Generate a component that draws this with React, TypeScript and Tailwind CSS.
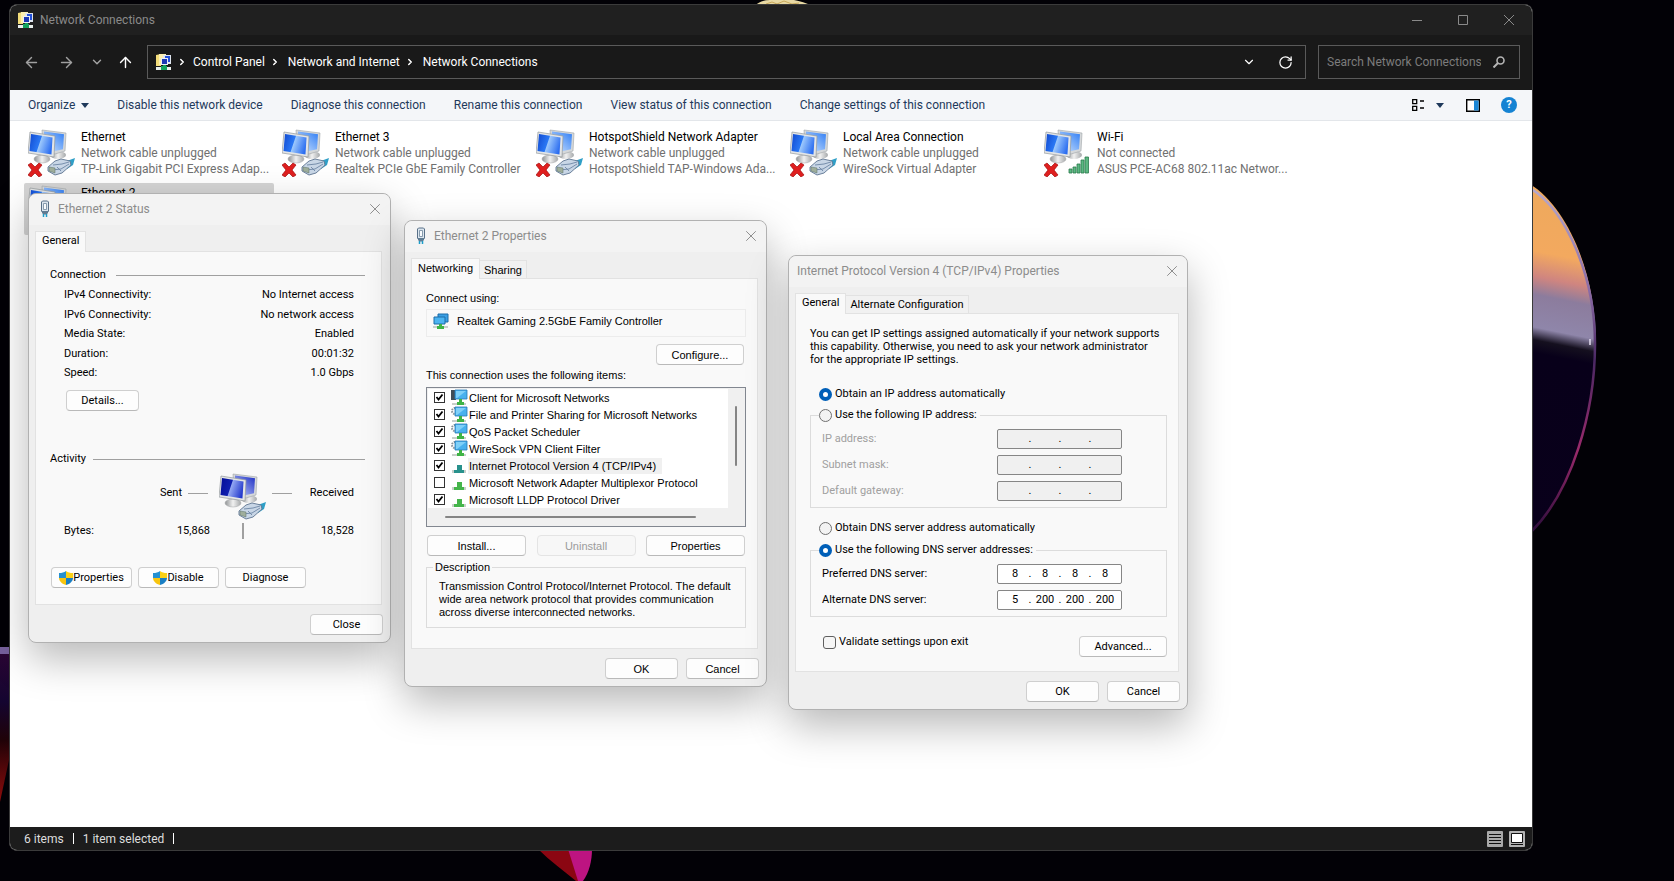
import { type ReactNode } from 'react'
import { ArrowLeft, ArrowRight, ArrowUp, ChevronDown, ChevronRight, RotateCw, X } from 'lucide-react'

const commands = [
  'Disable this network device',
  'Diagnose this connection',
  'Rename this connection',
  'View status of this connection',
  'Change settings of this connection',
]

const adapters = [
  { name: 'Ethernet', state: 'Network cable unplugged', device: 'TP-Link Gigabit PCI Express Adap...', kind: 'cable' },
  { name: 'Ethernet 3', state: 'Network cable unplugged', device: 'Realtek PCIe GbE Family Controller', kind: 'cable' },
  { name: 'HotspotShield Network Adapter', state: 'Network cable unplugged', device: 'HotspotShield TAP-Windows Ada...', kind: 'cable' },
  { name: 'Local Area Connection', state: 'Network cable unplugged', device: 'WireSock Virtual Adapter', kind: 'cable' },
  { name: 'Wi-Fi', state: 'Not connected', device: 'ASUS PCE-AC68 802.11ac Networ...', kind: 'wifi' },
  { name: 'Ethernet 2', state: '', device: '', kind: 'active' },
]

const statusRows = [
  ['IPv4 Connectivity:', 'No Internet access'],
  ['IPv6 Connectivity:', 'No network access'],
  ['Media State:', 'Enabled'],
  ['Duration:', '00:01:32'],
  ['Speed:', '1.0 Gbps'],
]

const items = [
  { name: 'Client for Microsoft Networks', on: true, icon: 'client' },
  { name: 'File and Printer Sharing for Microsoft Networks', on: true, icon: 'service' },
  { name: 'QoS Packet Scheduler', on: true, icon: 'service' },
  { name: 'WireSock VPN Client Filter', on: true, icon: 'service' },
  { name: 'Internet Protocol Version 4 (TCP/IPv4)', on: true, icon: 'selected' },
  { name: 'Microsoft Network Adapter Multiplexor Protocol', on: false, icon: 'protocol' },
  { name: 'Microsoft LLDP Protocol Driver', on: true, icon: 'protocol' },
]

function Wallpaper() {
  return (
    <div className="absolute inset-0 overflow-hidden bg-[#020106]" aria-hidden="true">
      <svg className="absolute left-[700px] top-0" width="180" height="8" viewBox="0 0 180 8">
        <path d="M54 6c5-4 10-6 16-6h24c6 1 12 3 19 6z" fill="#e8d9a4" />
        <path d="M66 4l6-2 5 2 7-3 8 3 7-1" stroke="#c9a95c" fill="none" />
      </svg>
      <svg className="absolute left-0 top-[640px]" width="12" height="180" viewBox="0 0 12 180">
        <defs>
          <linearGradient id="leftPetal" x1="0" y1="0" x2="0" y2="1">
            <stop offset="0" stopColor="#2c0634" />
            <stop offset=".35" stopColor="#140530" />
            <stop offset=".6" stopColor="#200207" />
            <stop offset="1" stopColor="#8e0c0c" />
          </linearGradient>
        </defs>
        <path d="M0 8h12v98L0 162z" fill="url(#leftPetal)" />
        <path d="M0 7h12v7H0z" fill="#76609c" />
      </svg>
      <svg className="absolute bottom-0 left-[530px]" width="70" height="34" viewBox="0 0 70 34">
        <path d="M8 2h32l10 32h-4C34 24 20 14 8 2z" fill="#8b0612" />
        <path d="M38 2h24c0 12-3 24-9 32h-5z" fill="#bd1481" />
      </svg>
      <svg className="absolute right-[74px] top-[184px]" width="70" height="356" viewBox="0 0 70 356">
        <defs>
          <linearGradient id="petal" gradientUnits="userSpaceOnUse" x1="35" y1="0" x2="-35" y2="350">
            <stop offset="0" stopColor="#eda95c" />
            <stop offset=".2" stopColor="#f3a95f" />
            <stop offset=".27" stopColor="#cf8580" />
            <stop offset=".32" stopColor="#8c7c9d" />
            <stop offset=".41" stopColor="#8f86aa" />
            <stop offset=".445" stopColor="#15101f" />
            <stop offset=".48" stopColor="#08001a" />
            <stop offset="1" stopColor="#09001b" />
          </linearGradient>
          <linearGradient id="rim" x1="0" y1="0" x2="0" y2="1">
            <stop offset="0" stopColor="#b7a9cc" />
            <stop offset=".3" stopColor="#8a6ba6" />
            <stop offset=".5" stopColor="#4a2863" />
            <stop offset=".76" stopColor="#9a2a6b" />
            <stop offset="1" stopColor="#2c0d3c" />
          </linearGradient>
        </defs>
        <path d="M0 0C38 24 66 90 66 160S42 310 0 350z" fill="url(#petal)" />
        <path d="M0 4C36 26 65 92 65 160S42 308 0 349" fill="none" stroke="url(#rim)" strokeWidth="2.5" />
        <path d="M60 155v6" stroke="#e4def0" strokeWidth="1.5" />
      </svg>
    </div>
  )
}

function Monitors({ deep }: { deep?: boolean }) {
  const id = deep ? 'deep' : 'bright'
  return (
    <>
      <defs>
        <linearGradient id={`screen-${id}`} x1="0" y1=".3" x2="1" y2=".6">
          <stop offset="0" stopColor={deep ? '#06109a' : '#1450d6'} />
          <stop offset=".42" stopColor={deep ? '#1020b0' : '#2a78f4'} />
          <stop offset=".46" stopColor={deep ? '#93a7f2' : '#9cc8fc'} />
          <stop offset="1" stopColor={deep ? '#2238cc' : '#2a6cf0'} />
        </linearGradient>
        <linearGradient id={`back-${id}`} x1="0" y1="1" x2="1" y2="0">
          <stop offset="0" stopColor={deep ? '#c3cffa' : '#d3e7fe'} />
          <stop offset="1" stopColor={deep ? '#1a2cc4' : '#2f7df4'} />
        </linearGradient>
        <linearGradient id={`stand-${id}`} x1="0" y1="0" x2="1" y2="0">
          <stop offset="0" stopColor="#8f9294" />
          <stop offset=".5" stopColor="#f1f1f1" />
          <stop offset="1" stopColor="#a5a8aa" />
        </linearGradient>
      </defs>
      <ellipse cx="30" cy="26" rx="8" ry="4" fill={`url(#stand-${id})`} />
      <path d="M14 1l24 3-1 18-10 3-12-4z" fill="#d5d8da" stroke="#9ea3a6" strokeWidth=".6" />
      <path d="M16 2.500l20 2.800-1 15-9 2-10-4z" fill={`url(#back-${id})`} />
      <path d="M11 23l8 1 1 5h-8z" fill="#b6babd" />
      <ellipse cx="14" cy="30" rx="8" ry="4" fill={`url(#stand-${id})`} stroke="#a4a7a9" strokeWidth=".5" />
      <path d="M2 3l25 4-1 21L0 24z" fill="#e3e5e6" stroke="#94999c" strokeWidth=".7" />
      <path d="M3 5l21.500 3.500-1 17L1.500 22z" fill={`url(#screen-${id})`} />
    </>
  )
}

function Plug() {
  return (
    <g>
      <path d="M36 33l11-4-2 7-6 4z" fill="#2f9fc7" />
      <path d="M20 38l7-6 6-2 9 2 1 4-9 8-7 2-7-4z" fill="#c8d6e6" stroke="#5f7591" strokeWidth=".9" />
      <path d="M25 36l9-1 7-2M24 41l9-1 8-5M29 38l4 4" fill="none" stroke="#6d86a5" strokeWidth=".9" />
      <path d="M21 38l6 1v5l-6-2z" fill="#9fae9b" stroke="#5d7368" strokeWidth=".5" />
    </g>
  )
}

function AdapterIcon({ kind }: { kind: string }) {
  return (
    <svg className="shrink-0" width="48" height="48" viewBox="0 0 48 48" aria-hidden="true">
      <Monitors deep={kind === 'deep'} />
      {kind === 'wifi' ? (
        <g fill="#5cb882" stroke="#2a7a4c" strokeWidth=".8">
          <path d="M25 40h3v4h-3zM29 38h3v6h-3zM33 35h3v9h-3zM37 31h3v13h-3zM41 28h3.500v16H41z" />
        </g>
      ) : (
        <Plug />
      )}
      {(kind === 'cable' || kind === 'wifi') && (
        <path d="M0 36l3-2 4 4 4-4 3 2-4 5 4 5-3 2-4-4-4 4-3-2 4-5z" fill="#df1f1f" stroke="#a30f0f" strokeWidth=".7" />
      )}
    </svg>
  )
}

function FolderIcon() {
  return (
    <svg className="shrink-0" width="16" height="16" viewBox="0 0 16 16" aria-hidden="true">
      <path d="M0 1l5-1v12H0z" fill="#f3dd7a" />
      <path d="M3 0h7v11H3z" fill="#fbeeb0" />
      <path d="M7 1h8v9H7z" fill="#dfe5ee" />
      <path d="M9 2h5v6H9z" fill="#2350d8" />
      <path d="M5 4h7v7H5z" fill="#e9eef5" />
      <path d="M6 5h5v5H6z" fill="#1b38b4" />
      <path d="M7 11h3v2H7z" fill="#14a05c" />
      <path d="M0 13h15v3H0z" fill="#e9efec" />
      <path d="M5 12h6v4H5z" fill="#12a35e" />
    </svg>
  )
}

function CableIcon() {
  return (
    <svg width="10" height="18" viewBox="0 0 10 18" aria-hidden="true">
      <path d="M2.500 1h5l1 1v9l-2 3h-3l-2-3V2z" fill="#dbe5ee" stroke="#587088" />
      <path d="M3.500 3.500h3v6h-3z" fill="#f8fbfd" stroke="#6d859b" strokeWidth=".8" />
      <path d="M2 11h6v1l-1 2H3l-1-2z" fill="#5f7b92" />
      <path d="M3.500 14v3M6.500 14v3" stroke="#1b9dc9" strokeWidth="1.500" />
    </svg>
  )
}

function ShieldIcon() {
  return (
    <svg width="14" height="14" viewBox="0 0 14 14" aria-hidden="true">
      <path d="M7 0C5 1.500 3 2 0 2v5h7z" fill="#2590d0" />
      <path d="M7 0c2 1.500 4 2 7 2v5H7z" fill="#fbd116" />
      <path d="M0 7c0 3 3 6 7 7V7z" fill="#f8c50f" />
      <path d="M14 7c0 3-3 6-7 7V7z" fill="#1a7fc4" />
    </svg>
  )
}

function ItemIcon({ icon }: { icon: string }) {
  const protocol = icon === 'protocol' || icon === 'selected'
  const green = icon === 'selected' ? '#28918c' : '#45b54b'
  return (
    <svg className="shrink-0" width="17" height="17" viewBox="0 0 17 17" aria-hidden="true">
      {protocol ? (
        <>
          <path d="M1 13h14v3H1z" fill="#c9cfcb" />
          <path d="M6 8h5v5h2v3H3v-3h3z" fill={green} />
        </>
      ) : (
        <>
          {icon === 'client' && <path d="M0 1h5v10H0z" fill="#414c55" />}
          {icon === 'service' && <circle cx="4" cy="5" r="3" fill="none" stroke="#8b9399" strokeWidth="2" strokeDasharray="1.500 1" />}
          <path d="M4 1h12v9H4z" fill="#48b1ee" stroke="#2878b4" strokeWidth=".8" />
          <path d="M5 2h10l-9 7H5z" fill="#7fd0f8" />
          <path d="M1 14h14v2H1z" fill="#c9cfcb" />
          <path d="M8 10h3v3h2v3H6v-3h2z" fill="#3fb446" />
        </>
      )}
    </svg>
  )
}

function ControllerIcon() {
  return (
    <svg width="16" height="16" viewBox="0 0 16 16" aria-hidden="true">
      <path d="M5 1h10v8H5z" fill="#3a9fe4" stroke="#1d6da8" />
      <path d="M1 4h11v7H1z" fill="#4cb4f1" stroke="#1d6da8" />
      <path d="M0 13h15v2H0z" fill="#c9cfcb" />
      <path d="M6 11h3v2h2v3H4v-3h2z" fill="#3fb446" />
    </svg>
  )
}

function Button({ children, className = 'w-[73px]', disabled }: { children: ReactNode; className?: string; disabled?: boolean }) {
  return (
    <button
      type="button"
      disabled={disabled}
      className={`flex h-[21px] items-center justify-center rounded border border-[#cfcfcf] border-b-[#b9b9b9] bg-[#fdfdfd] disabled:border-[#e4e4e4] disabled:bg-[#f7f7f7] disabled:text-[#9b9b9b] ${className}`}
    >
      {children}
    </button>
  )
}

function Dialog({ title, icon, tabs, className, footer, children }: {
  title: string
  icon?: ReactNode
  tabs: string[]
  className: string
  footer: ReactNode
  children: ReactNode
}) {
  return (
    <section
      role="dialog"
      aria-label={title}
      className={`absolute rounded-lg border border-[#b1b1b1] bg-[#efefef] text-[11px] leading-4 whitespace-nowrap text-black shadow-[0_16px_40px_rgba(0,0,0,0.28)] ${className}`}
    >
      <header className="flex h-[31px] items-center rounded-t-lg bg-[#f3f3f3] pr-[6px] pb-[2px] pl-2 font-['Roboto',sans-serif] text-[12px] text-[#8c8c8c]">
        {icon && <span className="mr-2 ml-[3px]">{icon}</span>}
        <h2>{title}</h2>
        <button type="button" aria-label="Close" className="ml-auto">
          <X size={18} strokeWidth={1.3} />
        </button>
      </header>
      <div className="px-[6px] pt-[6px]">
        <div role="tablist" className="flex items-end">
          {tabs.map((tab, i) => (
            <button
              key={tab}
              type="button"
              role="tab"
              aria-selected={i === 0}
              className={
                i === 0
                  ? 'relative -mb-px h-[21px] border border-b-0 border-[#e2e2e2] bg-[#f9f9f9] px-[6px] pb-[2px]'
                  : 'h-[18px] border border-b-0 border-l-0 border-[#e2e2e2] bg-[#f1f1f1] px-1'
              }
            >
              {tab}
            </button>
          ))}
        </div>
        <div className="mr-[2px] border border-[#e2e2e2] bg-[#f9f9f9]">{children}</div>
      </div>
      <footer className="flex justify-end gap-2 px-[7px] pt-[9px] pb-[7px]">{footer}</footer>
    </section>
  )
}

function StatusDialog() {
  return (
    <Dialog
      title="Ethernet 2 Status"
      icon={<CableIcon />}
      tabs={['General']}
      className="top-[193px] left-[28px] w-[363px] font-['Roboto',sans-serif]"
      footer={<Button>Close</Button>}
    >
      <div className="pt-[15px] pr-4 pb-4 pl-[14px]">
        <div className="flex items-center gap-[10px]">
          <h3>Connection</h3>
          <hr className="grow border-[#a0a0a0]" />
        </div>
        <dl className="mt-1 flex h-[94px] flex-col justify-between pr-[11px] pl-[14px]">
          {statusRows.map(([label, value]) => (
            <div key={label} className="flex justify-between">
              <dt>{label}</dt>
              <dd>{value}</dd>
            </div>
          ))}
        </dl>
        <div className="mt-[9px] pl-4">
          <Button>Details...</Button>
        </div>
        <div className="mt-10 flex items-center gap-[7px]">
          <h3>Activity</h3>
          <hr className="grow border-[#a0a0a0]" />
        </div>
        <div className="mt-[6px] grid grid-cols-[150px_58px_1fr] pr-[11px] pl-[14px]">
          <div className="flex h-10 items-center justify-end gap-[6px] pr-[6px]">
            Sent <hr className="w-5 border-[#a0a0a0]" />
          </div>
          <div className="flex justify-center">
            <AdapterIcon kind="deep" />
          </div>
          <div className="flex h-10 items-center justify-between">
            <hr className="w-5 border-[#a0a0a0]" /> Received
          </div>
        </div>
        <div className="mt-[2px] grid grid-cols-[150px_58px_1fr] pr-[11px] pl-[14px]">
          <div className="flex justify-between pr-1">
            <span>Bytes:</span>
            <span>15,868</span>
          </div>
          <div className="mx-auto h-4 w-[2px] bg-[#a0a0a0]" />
          <span className="text-right">18,528</span>
        </div>
        <div className="mt-7 flex gap-[6px] pl-px">
          <Button className="w-[81px]"><ShieldIcon />Properties</Button>
          <Button className="w-[81px]"><ShieldIcon />Disable</Button>
          <Button className="w-[81px]">Diagnose</Button>
        </div>
      </div>
    </Dialog>
  )
}

function PropertiesDialog() {
  return (
    <Dialog
      title="Ethernet 2 Properties"
      icon={<CableIcon />}
      tabs={['Networking', 'Sharing']}
      className="top-[220px] left-[404px] w-[363px] font-['Liberation_Sans',sans-serif]"
      footer={<><Button>OK</Button><Button>Cancel</Button></>}
    >
      <div className="pt-[11px] pr-[11px] pb-5 pl-[14px]">
        <p>Connect using:</p>
        <div className="mt-[3px] flex h-7 items-center gap-2 border border-[#ececec] px-[6px] pb-1">
          <ControllerIcon />
          Realtek Gaming 2.5GbE Family Controller
        </div>
        <div className="mt-[7px] flex justify-end pr-[2px]">
          <Button className="w-[88px]">Configure...</Button>
        </div>
        <p className="mt-[2px]">This connection uses the following items:</p>
        <div className="mt-1 grid h-[140px] grid-cols-[1fr_16px] grid-rows-[1fr_17px] border border-[#828790] bg-[#f0f0f0] p-px">
          <ul className="bg-white pl-[6px]">
            {items.map((item) => (
              <li key={item.name}>
                <label className="flex h-[17px] items-center">
                  <span className="relative flex">
                    <input type="checkbox" defaultChecked={item.on} className="peer size-[11px] appearance-none border border-[#333] bg-white" />
                    <svg className="absolute inset-0 hidden peer-checked:block" width="11" height="11" viewBox="0 0 11 11">
                      <path d="M2.500 5l2 2.500 4-5" fill="none" stroke="#000" strokeWidth="1.800" />
                    </svg>
                  </span>
                  <span className="ml-[6px]"><ItemIcon icon={item.icon} /></span>
                  <span className={item.icon === 'selected' ? 'bg-[#f0f0f0] pr-[6px] pl-px' : 'pl-px'}>{item.name}</span>
                </label>
              </li>
            ))}
          </ul>
          <div className="flex justify-center pt-[17px]">
            <div className="h-[60px] w-[2px] rounded bg-[#858585]" />
          </div>
          <div className="flex items-center pl-[17px]">
            <div className="h-[2px] w-[251px] rounded bg-[#858585]" />
          </div>
        </div>
        <div className="mt-2 flex justify-between px-px">
          <Button className="w-[99px]">Install...</Button>
          <Button className="w-[99px]" disabled>Uninstall</Button>
          <Button className="w-[99px]">Properties</Button>
        </div>
        <fieldset className="mt-[3px] border border-[#dcdcdc] px-[6px] pb-2">
          <legend className="px-[2px]">Description</legend>
          <p className="mt-[5px] pl-[6px] leading-[13px]">
            Transmission Control Protocol/Internet Protocol. The default<br />
            wide area network protocol that provides communication<br />
            across diverse interconnected networks.
          </p>
        </fieldset>
      </div>
    </Dialog>
  )
}

const radioClass =
  'size-[13px] appearance-none rounded-full border border-[#707070] bg-[#f3f3f3] checked:border-4 checked:border-[#005fb8] checked:bg-white'

function IpField({ label, octets, disabled }: { label: string; octets: string[]; disabled?: boolean }) {
  return (
    <div role="group" aria-label={label} className="flex h-5 items-center">
      <span className={disabled ? 'w-[175px] text-[#a0a0a0]' : 'w-[175px]'}>{label}</span>
      <div className={`flex h-5 w-[125px] items-center rounded-[2px] border border-[#868686] pl-[5px] ${disabled ? 'bg-[#f0f0f0]' : 'bg-white'}`}>
        {octets.map((octet, i) => (
          <div key={i} className="flex">
            {i > 0 && <span className="w-[6px] text-center">.</span>}
            <input
              aria-label={`${label} octet ${i + 1}`}
              defaultValue={octet}
              disabled={disabled}
              className="w-6 bg-transparent text-center"
            />
          </div>
        ))}
      </div>
    </div>
  )
}

function Ipv4Dialog() {
  const empty = ['', '', '', '']
  return (
    <Dialog
      title="Internet Protocol Version 4 (TCP/IPv4) Properties"
      tabs={['General', 'Alternate Configuration']}
      className="top-[255px] left-[788px] w-[400px] font-['Roboto',sans-serif]"
      footer={<><Button>OK</Button><Button>Cancel</Button></>}
    >
      <div className="pt-[13px] pr-[11px] pb-[14px] pl-[14px]">
        <p className="leading-[13px]">
          You can get IP settings assigned automatically if your network supports<br />
          this capability. Otherwise, you need to ask your network administrator<br />
          for the appropriate IP settings.
        </p>
        <label className="mt-5 flex items-center gap-[3px] pl-[9px]">
          <input type="radio" name="ip" defaultChecked className={radioClass} />
          Obtain an IP address automatically
        </label>
        <fieldset className="mt-[5px] border border-[#dcdcdc] px-2 pb-[6px]">
          <legend>
            <label className="flex items-center gap-[3px] pr-[3px]">
              <input type="radio" name="ip" className={radioClass} />
              Use the following IP address:
            </label>
          </legend>
          <div className="flex flex-col gap-[6px] pt-[6px] pl-[3px]">
            <IpField label="IP address:" octets={empty} disabled />
            <IpField label="Subnet mask:" octets={empty} disabled />
            <IpField label="Default gateway:" octets={empty} disabled />
          </div>
        </fieldset>
        <label className="mt-3 flex items-center gap-[3px] pl-[9px]">
          <input type="radio" name="dns" className={radioClass} />
          Obtain DNS server address automatically
        </label>
        <fieldset className="mt-[6px] border border-[#dcdcdc] px-2 pb-[6px]">
          <legend>
            <label className="flex items-center gap-[3px] pr-[3px]">
              <input type="radio" name="dns" defaultChecked className={radioClass} />
              Use the following DNS server addresses:
            </label>
          </legend>
          <div className="flex flex-col gap-[6px] pt-[6px] pl-[3px]">
            <IpField label="Preferred DNS server:" octets={['8', '8', '8', '8']} />
            <IpField label="Alternate DNS server:" octets={['5', '200', '200', '200']} />
          </div>
        </fieldset>
        <div className="mt-[17px] flex items-start justify-between pl-[13px]">
          <label className="flex items-center gap-[3px]">
            <input type="checkbox" className="size-[13px] appearance-none rounded-[3px] border border-[#5f5f5f] bg-[#f6f6f6]" />
            Validate settings upon exit
          </label>
          <Button className="mt-[2px] w-[88px]">Advanced...</Button>
        </div>
      </div>
    </Dialog>
  )
}

function Explorer() {
  return (
    <main className="absolute top-1 right-[141px] bottom-[30px] left-[9px] flex flex-col overflow-hidden rounded-lg border border-[#3b3b3b] bg-white font-['Roboto',sans-serif] text-[12px] leading-4 whitespace-nowrap">
      <header className="flex h-[30px] shrink-0 items-center bg-[#202020] pl-2 text-[#8a8a8a]">
        <FolderIcon />
        <h1 className="ml-[6px]">Network Connections</h1>
        <div className="ml-auto flex">
          <button type="button" aria-label="Minimize" className="flex w-[46px] items-center justify-center">
            <svg width="10" height="10" viewBox="0 0 10 10"><path d="M0 5.500h10" stroke="currentColor" /></svg>
          </button>
          <button type="button" aria-label="Maximize" className="flex w-[46px] items-center justify-center">
            <svg width="10" height="10" viewBox="0 0 10 10"><path d="M.5.5h9v9h-9z" stroke="currentColor" fill="none" /></svg>
          </button>
          <button type="button" aria-label="Close" className="flex w-[46px] items-center justify-center">
            <svg width="10" height="10" viewBox="0 0 10 10"><path d="M0 0l10 10M10 0L0 10" stroke="currentColor" /></svg>
          </button>
        </div>
      </header>

      <div className="flex h-[55px] shrink-0 items-center bg-[#191919] pr-3 pb-px pl-[13px] text-white">
        <button type="button" aria-label="Back" className="text-[#a0a0a0]"><ArrowLeft size={17} strokeWidth={2} /></button>
        <button type="button" aria-label="Forward" className="ml-[18px] text-[#a0a0a0]"><ArrowRight size={17} strokeWidth={2} /></button>
        <button type="button" aria-label="Recent locations" className="ml-[15px] text-[#a0a0a0]"><ChevronDown size={14} strokeWidth={2.5} /></button>
        <button type="button" aria-label="Up" className="ml-[13px]"><ArrowUp size={17} strokeWidth={2} /></button>
        <nav aria-label="Address" className="ml-[13px] flex h-[34px] grow items-center border border-[#5a5a5a] px-2">
          <FolderIcon />
          <ChevronRight className="mx-[5px]" size={10} strokeWidth={3.5} />
          <a href="#control-panel" className="ml-px">Control Panel</a>
          <ChevronRight className="mx-[5px]" size={10} strokeWidth={3.5} />
          <a href="#network" className="ml-[3px]">Network and Internet</a>
          <ChevronRight className="mx-[5px]" size={10} strokeWidth={3.5} />
          <a href="#connections" className="ml-[3px]">Network Connections</a>
          <button type="button" aria-label="Previous locations" className="ml-auto"><ChevronDown size={14} strokeWidth={2} /></button>
          <button type="button" aria-label="Refresh" className="mr-1 ml-[22px]"><RotateCw size={15} strokeWidth={2} /></button>
        </nav>
        <div className="ml-3 flex h-[34px] w-[202px] items-center border border-[#5a5a5a] pr-[14px] pl-2">
          <input
            type="search"
            aria-label="Search Network Connections"
            placeholder="Search Network Connections"
            className="min-w-0 grow bg-transparent placeholder:text-[#7c7c7c]"
          />
          <svg width="12" height="12" viewBox="0 0 12 12" fill="none" stroke="#b4b4b4" aria-hidden="true">
            <circle cx="7.500" cy="4.500" r="3.500" strokeWidth="1.600" />
            <path d="M5 7L.5 11.500" strokeWidth="2" />
          </svg>
        </div>
      </div>

      <div className="flex h-[31px] shrink-0 items-center gap-[28px] border-b border-[#e3e6ea] bg-[#f4f6f9] pr-[15px] pl-[18px] text-[#1e395b]">
        <button type="button" className="flex items-center gap-[6px]">
          Organize
          <svg width="8" height="5" viewBox="0 0 8 5"><path d="M0 0h8L4 5z" fill="currentColor" /></svg>
        </button>
        {commands.map((command) => (
          <button key={command} type="button">{command}</button>
        ))}
        <div className="ml-auto flex items-center">
          <button type="button" aria-label="Change your view" className="flex items-center gap-3">
            <svg width="12" height="12" viewBox="0 0 12 12" fill="none" stroke="#000" strokeWidth="1.300">
              <path d="M.7.700h4v4h-4zM.7 7.300h4v4h-4zM8 2h4M8 9h4" />
            </svg>
            <svg width="8" height="5" viewBox="0 0 8 5"><path d="M0 0h8L4 5z" fill="currentColor" /></svg>
          </button>
          <button type="button" aria-label="Show the preview pane" className="ml-[22px]">
            <svg width="14" height="13" viewBox="0 0 14 13">
              <path d="M.7.700h12.600v11.600H.7z" fill="#fff" stroke="#000" strokeWidth="1.400" />
              <path d="M8 1.400h4.600v10.200H8z" fill="#1a86d6" />
            </svg>
          </button>
          <button type="button" aria-label="Help" className="ml-[21px] flex size-4 items-center justify-center rounded-full bg-[#1583d3] text-[11px] font-bold text-white">?</button>
        </div>
      </div>

      <ul className="flex min-h-0 grow flex-wrap content-start gap-1 pt-[6px] pr-20 pl-[14px]">
        {adapters.map((adapter) => (
          <li key={adapter.name} className={`flex h-[52px] w-[250px] gap-[5px] rounded-xs pt-[2px] pl-1 ${adapter.kind === 'active' ? 'bg-[#d4d4d4]' : ''}`}>
            <AdapterIcon kind={adapter.kind} />
            <div className="text-[#707070]">
              <h2 className="text-black">{adapter.name}</h2>
              {adapter.state && <p>{adapter.state}</p>}
              {adapter.device && <p>{adapter.device}</p>}
            </div>
          </li>
        ))}
      </ul>

      <footer className="flex h-[23px] shrink-0 items-center bg-[#1c1c1c] pr-[7px] pl-[14px] text-[#dedede]">
        <span>6 items</span>
        <span className="mx-[9px] h-[11px] w-px bg-white" />
        <span>1 item selected</span>
        <span className="mx-[9px] h-[11px] w-px bg-white" />
        <div className="ml-auto flex gap-[6px]">
          <button type="button" aria-label="Details view">
            <svg width="16" height="16" viewBox="0 0 16 16">
              <rect width="16" height="16" rx="1" fill="#a9a9a9" />
              <path d="M2 3.500h12M2 6.500h12M2 9.500h12M2 12.500h12" stroke="#111" />
            </svg>
          </button>
          <button type="button" aria-label="Large icons view">
            <svg width="16" height="16" viewBox="0 0 16 16">
              <rect width="16" height="16" rx="1" fill="#b5b5b5" />
              <path d="M2.500 2.500h11v9h-11z" fill="#fff" stroke="#111" />
              <path d="M2 13.500h12" stroke="#111" />
            </svg>
          </button>
        </div>
      </footer>
    </main>
  )
}

export default function App() {
  return (
    <div className="relative min-h-screen overflow-hidden">
      <Wallpaper />
      <Explorer />
      <StatusDialog />
      <PropertiesDialog />
      <Ipv4Dialog />
    </div>
  )
}
